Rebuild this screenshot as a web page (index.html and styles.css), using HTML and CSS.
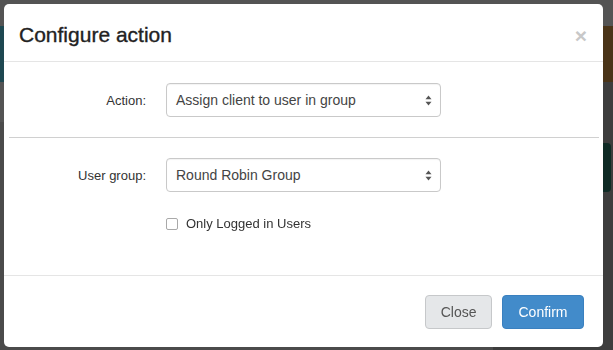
FILE: index.html
```html
<!DOCTYPE html>
<html lang="en">
<head>
    <meta charset="UTF-8">
    <meta name="viewport" content="width=device-width, initial-scale=1.0">
    <title>Configure action</title>
    <link rel="stylesheet" href="styles.css">
</head>
<body>
    <div class="page">
        <div class="topbar"></div>
        <div class="band">
            <div class="band-left"></div>
            <div class="band-right"></div>
        </div>
        <div class="content">
            <div class="content-main"></div>
            <div class="content-side">
                <div class="side-card"></div>
            </div>
        </div>
    </div>

    <div class="overlay">
        <div class="modal">
            <div class="modal-header">
                <h4 class="modal-title">Configure action</h4>
                <span class="close">&times;</span>
            </div>

            <div class="modal-body">
                <div class="form-row">
                    <label class="form-label">Action:</label>
                    <div class="select">
                        <span>Assign client to user in group</span>
                        <svg class="select-arrows" width="7" height="11" viewBox="0 0 7 11">
                            <path d="M3.5 0.5 L6.5 4.2 L0.5 4.2 Z" fill="#555"/>
                            <path d="M3.5 10.5 L6.5 6.8 L0.5 6.8 Z" fill="#555"/>
                        </svg>
                    </div>
                </div>

                <hr class="divider">

                <div class="form-row">
                    <label class="form-label">User group:</label>
                    <div class="select">
                        <span>Round Robin Group</span>
                        <svg class="select-arrows" width="7" height="11" viewBox="0 0 7 11">
                            <path d="M3.5 0.5 L6.5 4.2 L0.5 4.2 Z" fill="#555"/>
                            <path d="M3.5 10.5 L6.5 6.8 L0.5 6.8 Z" fill="#555"/>
                        </svg>
                    </div>
                </div>

                <div class="check-row">
                    <span class="checkbox"></span>
                    <span class="check-label">Only Logged in Users</span>
                </div>
            </div>

            <div class="modal-footer">
                <button class="btn btn-default">Close</button>
                <button class="btn btn-primary">Confirm</button>
            </div>
        </div>
    </div>
</body>
</html>
```

FILE: styles.css
```css
body {
    font-family: "Liberation Sans", Arial, sans-serif;
    font-size: 14px;
    color: #333;
    margin: 0;
    padding: 0;
    background: #4b4b4b;
    overflow: hidden;
}

/* page underneath the backdrop */
.page {
    height: 350px;
}
.topbar {
    height: 26px;
    background: #545454;
}
.band {
    display: flex;
    justify-content: space-between;
    height: 56px;
    background: #505050;
}
.band-left {
    width: 120px;
    background: #1e4851;
}
.band-right {
    width: 120px;
    background: #4a3418;
}
.content {
    display: flex;
    justify-content: space-between;
    height: 268px;
}
.content-main {
    flex: 1;
    border-top: 40px solid #545454;
}
.content-side {
    width: 120px;
    padding-top: 61px;
    background: #3d3d3d;
}
.side-card {
    height: 49px;
    margin-right: 2px;
    border-radius: 0 4px 4px 0;
    background: #0f2b25;
}

/* modal */
.overlay {
    position: fixed;
    top: 0;
    left: 0;
    right: 0;
    bottom: 0;
    padding: 4px 10px 3px 4px;
}
.modal {
    width: 599px;
    height: 343px;
    background: #fff;
    border-radius: 5px;
    display: flex;
    flex-direction: column;
}
.modal-header {
    display: flex;
    justify-content: space-between;
    align-items: center;
    padding: 17px 15px 13px 15px;
    border-bottom: 1px solid #e5e5e5;
}
.modal-title {
    margin: 0;
    font-size: 21px;
    line-height: 27px;
    font-weight: normal;
    color: #222;
    -webkit-text-stroke: 0.35px #222;
}
.close {
    font-size: 21px;
    font-weight: bold;
    line-height: 1;
    color: #c8c8c8;
    margin-top: 2px;
    margin-right: 1px;
}
.modal-body {
    flex: 1;
    padding: 21px 4px 0 5px;
}
.form-row {
    display: flex;
    align-items: center;
    gap: 20px;
}
.form-label {
    width: 137px;
    text-align: right;
    font-size: 13px;
    color: #333;
}
.select {
    box-sizing: border-box;
    width: 275px;
    height: 34px;
    padding: 0 8px 0 9px;
    display: flex;
    align-items: center;
    justify-content: space-between;
    border: 1px solid #c9c9c9;
    border-radius: 4px;
    box-shadow: inset 0 1px 1px rgba(0, 0, 0, 0.05);
    color: #444;
}
.divider {
    border: 0;
    border-top: 1px solid #d0d0d0;
    margin: 20px 0;
}
.check-row {
    display: flex;
    align-items: center;
    gap: 8px;
    margin: 22px 0 0 157px;
    line-height: 20px;
    font-size: 13px;
}
.checkbox {
    box-sizing: border-box;
    width: 12px;
    height: 12px;
    border: 1px solid #a9a9a9;
    border-radius: 2px;
    background: #fff;
}
.check-label {
    color: #333;
}
.modal-footer {
    display: flex;
    justify-content: flex-end;
    gap: 10px;
    padding: 19px 19px 18px 19px;
    border-top: 1px solid #e5e5e5;
}
.btn {
    font-family: "Liberation Sans", Arial, sans-serif;
    font-size: 14px;
    height: 34px;
    padding: 0 14.5px;
    border-radius: 4px;
    border: 1px solid;
}
.btn-default {
    background: #e5e7e9;
    border-color: #c6c8ca;
    color: #555;
}
.btn-primary {
    background: #428bca;
    border-color: #3a80bf;
    color: #fff;
    padding: 0 15.5px;
}
```
